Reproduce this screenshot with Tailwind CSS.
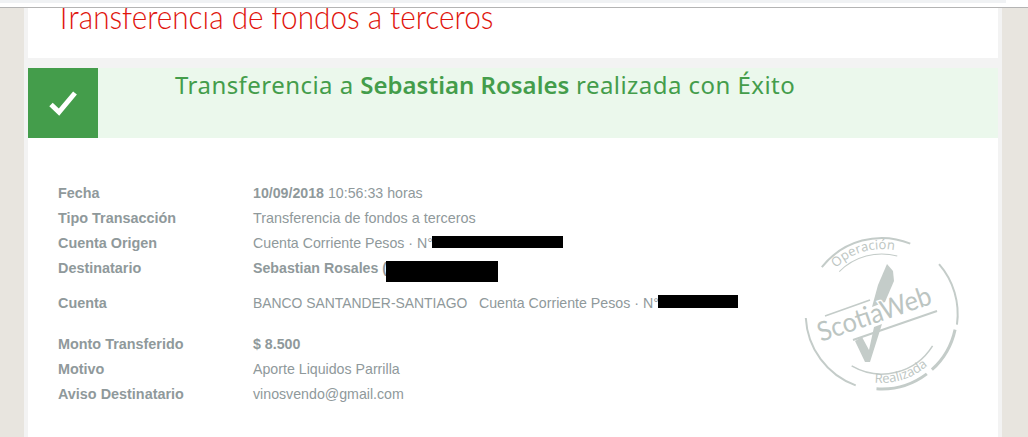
<!DOCTYPE html>
<html lang="es">
<head>
  <meta charset="UTF-8" />
  <title>Transferencia de fondos a terceros</title>
  <script src="https://cdn.jsdelivr.net/npm/@tailwindcss/browser@4"></script>
</head>
<body class="bg-[#e8e5df] h-[437px] overflow-hidden font-['Liberation_Sans',sans-serif]">
  <!-- barra superior del navegador -->
  <div class="h-2 bg-white border-b border-[#b4b4b4]">
    <div class="h-[3px] w-[1006px] bg-[#f0f2f4]"></div>
  </div>

  <div class="relative mx-[24px] w-[978px] h-[429px] px-1 bg-[#f3f3f3]">
    <div class="h-full bg-white">
      <!-- titulo -->
      <div class="h-[50px] overflow-hidden">
        <h1 class="ml-[27px] mt-[-12px] w-max origin-left scale-x-[0.9] text-[33px] leading-[40px] font-light text-[#e0140c] font-['Lato',sans-serif]">Transferencia de fondos a terceros</h1>
      </div>

      <!-- mensaje de exito -->
      <div class="pt-[10px] bg-[#f3f3f3]">
        <div class="flex h-[70px] bg-[#ebf8ec]">
          <div class="flex w-[70px] h-[70px] items-center justify-center bg-[#449d4b]">
            <svg width="32" height="28" viewBox="0 0 32 28"><path d="M4 15.5l8 7.5L28 4" fill="none" stroke="#fff" stroke-width="5"/></svg>
          </div>
          <p class="pl-[77px] pt-[1px] text-[24px] leading-[32px] tracking-[0.45px] text-[#449d4b] font-['Noto_Sans',sans-serif]">Transferencia a <b class="font-semibold tracking-normal">Sebastian Rosales</b> realizada con Éxito</p>
        </div>
      </div>

      <!-- detalle -->
      <dl class="pt-[43px] pl-[30px] text-[14.2px] leading-[25px] text-[#8f999b] grid grid-cols-[195px_1fr]">
        <dt class="text-[14.4px] font-bold">Fecha</dt>
        <dd><b>10/09/2018</b> 10:56:33 horas</dd>
        <dt class="text-[14.4px] font-bold">Tipo Transacción</dt>
        <dd class="text-[14.4px]">Transferencia de fondos a terceros</dd>
        <dt class="text-[14.4px] font-bold">Cuenta Origen</dt>
        <dd>Cuenta Corriente Pesos · N°</dd>
        <dt class="text-[14.4px] font-bold">Destinatario</dt>
        <dd><b>Sebastian Rosales (</b></dd>
        <dt class="text-[14.4px] font-bold pt-[10px] h-[51px]">Cuenta</dt>
        <dd class="text-[13.9px] pt-[10px] h-[51px]">BANCO SANTANDER-SANTIAGO &nbsp; <span class="text-[14.2px]">Cuenta Corriente Pesos · N°</span></dd>
        <dt class="text-[14.4px] font-bold">Monto Transferido</dt>
        <dd class="font-bold">$ 8.500</dd>
        <dt class="text-[14.4px] font-bold">Motivo</dt>
        <dd>Aporte Liquidos Parrilla</dd>
        <dt class="text-[14.4px] font-bold">Aviso Destinatario</dt>
        <dd>vinosvendo@gmail.com</dd>
      </dl>
    </div>

    <!-- datos tapados -->
    <div class="absolute left-[408px] top-[228px] w-[131px] h-[12px] bg-black"></div>
    <div class="absolute left-[362px] top-[253px] w-[112px] h-[21px] bg-black"></div>
    <div class="absolute left-[634px] top-[287px] w-[80px] h-[13px] bg-black"></div>

    <!-- timbre -->
    <svg class="absolute left-[766px] top-[217px]" width="180" height="175" viewBox="790 225 180 175">
      <defs>
        <path id="arcTop" d="M836 268A65 65 0 0 1 914.2 257.7"/>
        <path id="arcBottom" d="M874.5 382.6A69 69 0 0 0 934.6 358.4"/>
      </defs>
      <g fill="none" stroke="#c4ccc9">
        <circle cx="881.7" cy="314" r="76" pathLength="360" stroke-width="2" stroke-dasharray="74 286" transform="rotate(218 881.7 314)"/>
        <circle cx="881.7" cy="314" r="76" pathLength="360" stroke-width="2" stroke-dasharray="49 311" transform="rotate(319 881.7 314)"/>
        <circle cx="881.7" cy="314" r="75" pathLength="360" stroke-width="3" stroke-dasharray="36 324" transform="rotate(12 881.7 314)"/>
        <circle cx="881.7" cy="314" r="75" pathLength="360" stroke-width="3" stroke-dasharray="41 319" transform="rotate(53 881.7 314)"/>
        <circle cx="881.7" cy="314" r="76" pathLength="360" stroke-width="2" stroke-dasharray="67 293" transform="rotate(110 881.7 314)"/>
        <circle cx="881.7" cy="314" r="60" pathLength="360" stroke-width="1" stroke-dasharray="60 300" transform="rotate(225 881.7 314)"/>
        <circle cx="881.7" cy="314" r="60" pathLength="360" stroke-width="1.5" stroke-dasharray="88 272" transform="rotate(32 881.7 314)"/>
        <path d="M825 316L870 300" stroke-width="1.5"/>
        <path d="M853 340L937 311" stroke-width="2"/>
      </g>
      <path d="M887 264L893 271L894 281L885 302L872 307L878 285Z" fill="#c4ccc9"/>
      <path d="M882 324L870 362L865 362L855 341L862 337L869 350L874 327Z" fill="#c4ccc9"/>
      <text transform="translate(821 342) rotate(-19)" font-family="Lato" font-size="27" textLength="119" lengthAdjust="spacingAndGlyphs" fill="#bcc5c2" stroke="#fff" stroke-width="3" paint-order="stroke">ScotiaWeb</text>
      <text font-family="Open Sans" font-size="13" fill="#bcc5c2"><textPath href="#arcTop">Operación</textPath></text>
      <text font-family="Open Sans" font-size="13" fill="#bcc5c2"><textPath href="#arcBottom">Realizada</textPath></text>
    </svg>
  </div>
</body>
</html>
